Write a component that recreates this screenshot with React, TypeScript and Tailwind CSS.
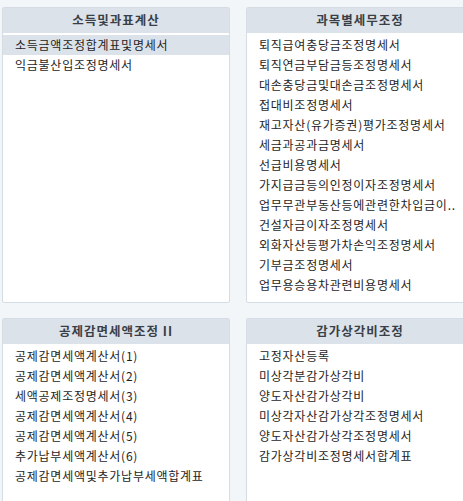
import React from "react";

type PanelProps = { title: string; items: string[]; selected?: number; height: string };

function Panel({ title, items, selected, height }: PanelProps) {
  return (
    <div className={`flex flex-col w-[228px] ${height} bg-white border border-[#d5dce4] rounded-[2px] overflow-hidden`}>
      <div className="h-[25px] shrink-0 flex items-center justify-center bg-[#dce2e9] text-[12.5px] font-bold text-[#3a3f47] tracking-[1px]">
        {title}
      </div>
      <div className="pt-[2px] flex flex-col">
        {items.map((it, i) => (
          <div
            key={i}
            className={`h-[20px] leading-[20px] pl-[12px] pr-[2px] text-[12px] text-[#1e1e1e] tracking-[0.75px] whitespace-nowrap overflow-hidden ${
              selected === i ? "bg-[#dce2e9]" : ""
            }`}
          >
            {it}
          </div>
        ))}
      </div>
    </div>
  );
}

export default function App() {
  return (
    <div
      className="w-[463px] h-[501px] overflow-hidden bg-[#f3f6f9] pt-[7px] pl-[2px]"
      style={{ fontFamily: '"Noto Sans CJK KR", "Noto Sans", sans-serif' }}
    >
      <div className="grid grid-cols-[228px_228px] gap-x-[16px] gap-y-[15px] w-[472px]">
        <Panel
          title="소득및과표계산"
          selected={0}
          height="h-[296px]"
          items={["소득금액조정합계표및명세서", "익금불산입조정명세서"]}
        />
        <Panel
          title="과목별세무조정"
          height="h-[296px]"
          items={[
            "퇴직급여충당금조정명세서",
            "퇴직연금부담금등조정명세서",
            "대손충당금및대손금조정명세서",
            "접대비조정명세서",
            "재고자산(유가증권)평가조정명세서",
            "세금과공과금명세서",
            "선급비용명세서",
            "가지급금등의인정이자조정명세서",
            "업무무관부동산등에관련한차입금이..",
            "건설자금이자조정명세서",
            "외화자산등평가차손익조정명세서",
            "기부금조정명세서",
            "업무용승용차관련비용명세서",
          ]}
        />
        <Panel
          title="공제감면세액조정 II"
          height="h-[200px]"
          items={[
            "공제감면세액계산서(1)",
            "공제감면세액계산서(2)",
            "세액공제조정명세서(3)",
            "공제감면세액계산서(4)",
            "공제감면세액계산서(5)",
            "추가납부세액계산서(6)",
            "공제감면세액및추가납부세액합계표",
          ]}
        />
        <Panel
          title="감가상각비조정"
          height="h-[200px]"
          items={[
            "고정자산등록",
            "미상각분감가상각비",
            "양도자산감가상각비",
            "미상각자산감가상각조정명세서",
            "양도자산감가상각조정명세서",
            "감가상각비조정명세서합계표",
          ]}
        />
      </div>
    </div>
  );
}
